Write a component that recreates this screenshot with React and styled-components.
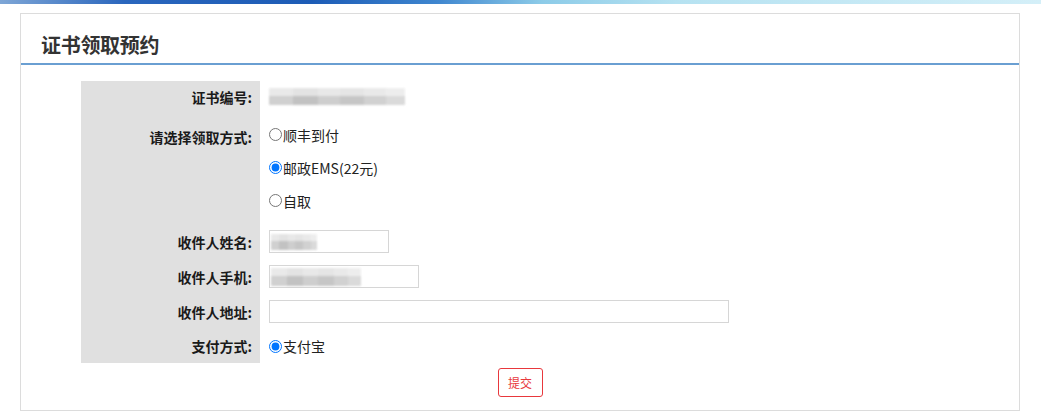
import React from "react";
import styled, { createGlobalStyle } from "styled-components";

const GlobalStyle = createGlobalStyle`
  body {
    margin: 0;
    background: #fff;
    font-family: "Noto Sans CJK SC", "Noto Sans", sans-serif;
    color: #222;
  }
`;

const TopStrip = styled.div`
  height: 4px;
  background: linear-gradient(
    90deg,
    #7ea6d6 0%,
    #2a66bd 12%,
    #1d5cb6 30%,
    #3f86cf 42%,
    #8ccbe8 52%,
    #b6e2f1 65%,
    #d4eff8 100%
  );
`;

const Panel = styled.div`
  margin: 9px 0 0 20px;
  width: 1000px;
  height: 398px;
  box-sizing: border-box;
  border: 1px solid #dcdcdc;
  display: flex;
  flex-direction: column;
`;

const Header = styled.div`
  height: 50px;
  box-sizing: border-box;
  padding: 10px 0 0 20px;
  display: flex;
  align-items: center;
  border-bottom: 2px solid #6a9fd2;
  margin-top: 1px;
`;

const Title = styled.h2`
  margin: 0;
  font-size: 20px;
  font-weight: 700;
  color: #333;
  letter-spacing: -0.3px;
`;

const Form = styled.div`
  margin: 16px 0 0 60px;
  width: 857px;
  display: grid;
  grid-template-columns: 179px 1fr;
`;

const Label = styled.div`
  background: #e0e0e0;
  height: ${(p) => p.$h || 35}px;
  padding: ${(p) => p.$pt || 0}px 8px 0 0;
  box-sizing: border-box;
  display: flex;
  align-items: ${(p) => (p.$top ? "flex-start" : "center")};
  justify-content: flex-end;
  font-size: 14px;
  font-weight: 700;
  color: #1a1a1a;
`;

const Value = styled.div`
  height: ${(p) => p.$h || 35}px;
  padding: ${(p) => p.$pt || 0}px 0 0 9px;
  box-sizing: border-box;
  display: flex;
  flex-direction: ${(p) => (p.$col ? "column" : "row")};
  align-items: ${(p) => (p.$col ? "flex-start" : "center")};
  font-size: 14px;
`;

const RadioLine = styled.label`
  height: 33px;
  display: flex;
  align-items: center;
  font-size: 14px;
  color: #222;
`;

const Radio = styled.input.attrs({ type: "radio" })`
  width: 13px;
  height: 13px;
  margin: 0 1px 0 0;
`;

const TextBox = styled.div`
  width: ${(p) => p.$w}px;
  height: 23px;
  box-sizing: border-box;
  border: 1px solid #d6d6d6;
  background: #fff;
  display: flex;
  align-items: center;
  padding-left: 1px;
`;

const Redacted = styled.div`
  width: ${(p) => p.$w}px;
  height: ${(p) => p.$hh || 16}px;
  background:
    linear-gradient(180deg, rgba(255, 255, 255, 0.55) 0 45%, transparent 45%),
    linear-gradient(
      90deg,
      #c8c8c8 0 18%,
      #b8b8b8 18% 36%,
      #c6c6c6 36% 52%,
      #bdbdbd 52% 70%,
      #c9c9c9 70% 86%,
      #d4d4d4 86% 100%
    );
  filter: blur(1.2px);
  opacity: 0.85;
`;

const ButtonRow = styled.div`
  display: flex;
  justify-content: center;
  margin-top: 5px;
`;

const Submit = styled.button`
  width: 45px;
  height: 29px;
  border: 1px solid #e8383d;
  border-radius: 3px;
  background: #fff;
  color: #e8383d;
  font-family: "Noto Sans CJK SC", sans-serif;
  font-size: 12px;
  padding: 0;
  cursor: pointer;
`;

export default function App() {
  return (
    <>
      <GlobalStyle />
      <TopStrip />
      <Panel>
        <Header>
          <Title>证书领取预约</Title>
        </Header>
        <Form>
          <Label $h={31}>证书编号:</Label>
          <Value $h={31}>
            <Redacted $w={136} $hh={17} />
          </Value>

          <Label $h={112} $top $pt={15}>请选择领取方式:</Label>
          <Value $h={112} $col $pt={6}>
            <RadioLine>
              <Radio name="way" />顺丰到付
            </RadioLine>
            <RadioLine>
              <Radio name="way" defaultChecked />邮政EMS(22元)
            </RadioLine>
            <RadioLine>
              <Radio name="way" />自取
            </RadioLine>
          </Value>

          <Label>收件人姓名:</Label>
          <Value>
            <TextBox $w={120}>
              <Redacted $w={46} />
            </TextBox>
          </Value>

          <Label>收件人手机:</Label>
          <Value>
            <TextBox $w={150}>
              <Redacted $w={90} $hh={18} />
            </TextBox>
          </Value>

          <Label>收件人地址:</Label>
          <Value>
            <TextBox $w={460} />
          </Value>

          <Label $h={34}>支付方式:</Label>
          <Value $h={34}>
            <RadioLine>
              <Radio name="pay" defaultChecked />支付宝
            </RadioLine>
          </Value>
        </Form>
        <ButtonRow>
          <Submit>提交</Submit>
        </ButtonRow>
      </Panel>
    </>
  );
}
